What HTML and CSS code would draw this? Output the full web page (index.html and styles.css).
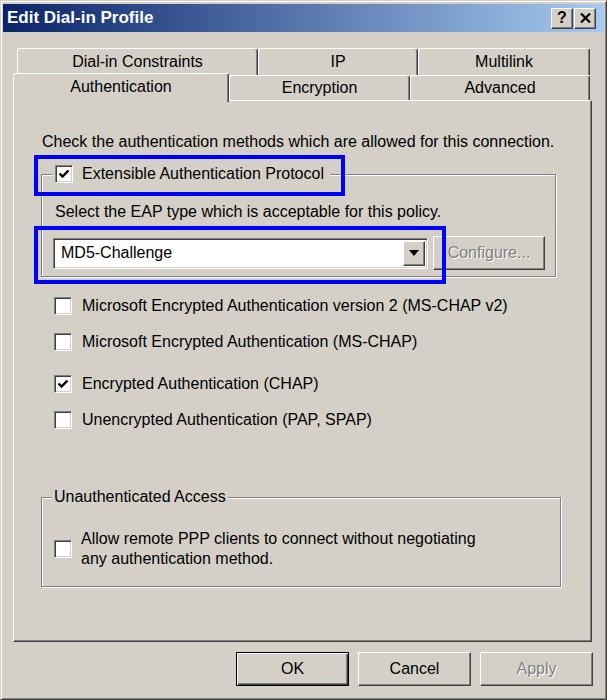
FILE: index.html
```html
<!DOCTYPE html>
<html lang="en">
<head>
    <meta charset="UTF-8">
    <title>Edit Dial-in Profile</title>
    <link rel="stylesheet" href="styles.css">
</head>
<body>
    <div class="window">
        <div class="titlebar">
            <span class="title">Edit Dial-in Profile</span>
            <div class="caption-btns">
                <span class="cap-btn help">?</span>
                <span class="cap-btn">
                    <svg width="11" height="10" viewBox="0 0 11 10"><path d="M1 0.5 L10 9.5 M10 0.5 L1 9.5" stroke="#000" stroke-width="2.2" fill="none"/></svg>
                </span>
            </div>
        </div>

        <div class="tabs">
            <div class="tab-row back">
                <div class="tab w-dial">Dial-in Constraints</div>
                <div class="tab w-ip">IP</div>
                <div class="tab w-multi">Multilink</div>
            </div>
            <div class="tab-row front">
                <div class="tab selected w-auth">Authentication</div>
                <div class="tab w-enc">Encryption</div>
                <div class="tab w-adv">Advanced</div>
            </div>
        </div>

        <div class="panel">
            <p class="intro">Check the authentication methods which are allowed for this connection.</p>

            <fieldset class="group eap">
                <legend><span class="checkbox checked"><svg width="12" height="12" viewBox="0 0 12 12"><path d="M1.5 5.5 L4.5 8.5 L10.5 2.5" stroke="#000" stroke-width="2.4" fill="none"/></svg></span>Extensible Authentication Protocol</legend>
                <p class="hint">Select the EAP type which is acceptable for this policy.</p>
                <div class="eap-row">
                    <div class="combo">
                        <span class="combo-text">MD5-Challenge</span>
                        <span class="combo-btn"><svg width="10" height="6" viewBox="0 0 10 6"><path d="M0 0 H10 L5 6 Z" fill="#000"/></svg></span>
                    </div>
                    <span class="btn disabled configure">Configure...</span>
                </div>
            </fieldset>

            <ul class="methods">
                <li><span class="checkbox"></span>Microsoft Encrypted Authentication version 2 (MS-CHAP v2)</li>
                <li><span class="checkbox"></span>Microsoft Encrypted Authentication (MS-CHAP)</li>
                <li class="wide"><span class="checkbox checked"><svg width="12" height="12" viewBox="0 0 12 12"><path d="M1.5 5.5 L4.5 8.5 L10.5 2.5" stroke="#000" stroke-width="2.4" fill="none"/></svg></span>Encrypted Authentication (CHAP)</li>
                <li><span class="checkbox"></span>Unencrypted Authentication (PAP, SPAP)</li>
            </ul>

            <fieldset class="group unauth">
                <legend>Unauthenticated Access</legend>
                <div class="unauth-row">
                    <span class="checkbox"></span>
                    <span class="unauth-text">Allow remote PPP clients to connect without negotiating<br>any authentication method.</span>
                </div>
            </fieldset>

            <!-- annotation boxes drawn over the dialog -->
            <div class="hl hl-eap"></div>
            <div class="hl hl-combo"></div>
        </div>

        <div class="buttons">
            <span class="btn default">OK</span>
            <span class="btn">Cancel</span>
            <span class="btn disabled">Apply</span>
        </div>
    </div>
</body>
</html>
```

FILE: styles.css
```css
body {
    margin: 0;
    background: #d4d0c8;
    font-family: "Liberation Sans", Arial, sans-serif;
    font-size: 16px;
    color: #000;
}
.window {
    width: 607px;
    height: 700px;
    box-sizing: border-box;
    border: 1px solid;
    border-color: #d4d0c8 #404040 #404040 #d4d0c8;
    box-shadow: inset 1px 1px #fff, inset -1px -1px #808080;
    padding: 2px;
    display: flex;
    flex-direction: column;
}
.titlebar {
    margin-top: 1px;
    height: 28px;
    background: linear-gradient(to right, #0a246a, #a6caf0);
    display: flex;
    align-items: center;
    justify-content: space-between;
    padding: 0 8px 0 4px;
}
.title {
    color: #fff;
    font-weight: bold;
    font-size: 17px;
}
.caption-btns {
    display: flex;
    gap: 1px;
}
.cap-btn {
    width: 22px;
    height: 21px;
    box-sizing: border-box;
    background: #d4d0c8;
    border: 1px solid;
    border-color: #fff #404040 #404040 #fff;
    box-shadow: inset -1px -1px #808080;
    display: flex;
    align-items: center;
    justify-content: center;
}
.cap-btn.help {
    font-weight: bold;
    font-size: 16px;
    line-height: 1;
}

/* tabs */
.tabs {
    margin: 16px 12px 0 10px;
}
.tab-row {
    display: flex;
    height: 27px;
}
.tab-row.back {
    padding-left: 4px;
}
.tab-row.front {
    margin-top: -2px;
    align-items: flex-start;
}
.tab {
    box-sizing: border-box;
    height: 27px;
    background: #d4d0c8;
    border: 1px solid #fff;
    border-bottom: none;
    border-right-color: #404040;
    box-shadow: inset -1px 0 #808080;
    border-radius: 3px 3px 0 0;
    display: flex;
    align-items: center;
    justify-content: center;
}
.front .tab {
    height: 25px;
    margin-top: 2px;
}
.front .tab.selected {
    height: 29px;
    margin-top: 0;
    margin-bottom: -2px;
    position: relative;
    z-index: 1;
    padding-bottom: 2px;
}
.w-dial { width: 241px; }
.w-ip { width: 160px; }
.w-multi { width: 172px; }
.w-auth { width: 216px; }
.w-enc { width: 181px; }
.w-adv { width: 180px; }

/* page body */
.panel {
    position: relative;
    margin: 0 12px 0 10px;
    height: 542px;
    box-sizing: border-box;
    border: 1px solid;
    border-color: #fff #404040 #404040 #fff;
    box-shadow: inset -1px -1px #808080;
    padding-top: 31px;
}
.intro {
    margin: 0 0 0 28px;
    line-height: 20px;
}
.group {
    box-sizing: border-box;
    margin: 12px 0 0 27px;
    border: 1px solid #808080;
    box-shadow: inset 1px 1px #fff, 1px 1px #fff;
    min-width: 0;
}
.group legend {
    line-height: 20px;
    height: 20px;
    display: flex;
    align-items: center;
    background: #d4d0c8;
}
.eap {
    width: 515px;
    padding: 18px 0 6px 11px;
}
.eap legend {
    padding: 0 6px 0 2px;
}
.eap legend .checkbox {
    margin-right: 9px;
}
.hint {
    margin: 0 0 0 2px;
    line-height: 20px;
}
.eap-row {
    margin-top: 14px;
    display: flex;
    align-items: center;
    gap: 5px;
    height: 34px;
}
.combo {
    width: 375px;
    height: 31px;
    box-sizing: border-box;
    background: #fff;
    border: 1px solid;
    border-color: #808080 #fff #fff #808080;
    box-shadow: inset 1px 1px #404040, inset -1px -1px #d4d0c8;
    display: flex;
    align-items: center;
    justify-content: space-between;
    padding: 2px;
}
.combo-text {
    padding-left: 5px;
}
.combo-btn {
    width: 22px;
    height: 100%;
    box-sizing: border-box;
    background: #d4d0c8;
    border: 1px solid;
    border-color: #fff #404040 #404040 #fff;
    box-shadow: inset -1px -1px #808080;
    display: flex;
    align-items: center;
    justify-content: center;
}

.checkbox {
    width: 18px;
    height: 18px;
    flex: none;
    box-sizing: border-box;
    background: #fff;
    border: 1px solid;
    border-color: #808080 #fff #fff #808080;
    box-shadow: inset 1px 1px #404040, inset -1px -1px #d4d0c8;
    display: flex;
    align-items: center;
    justify-content: center;
}

.methods {
    list-style: none;
    margin: 19px 0 0;
    padding: 0 0 0 40px;
}
.methods li {
    display: flex;
    align-items: center;
    height: 20px;
    margin-top: 16px;
}
.methods li:first-child {
    margin-top: 0;
}
.methods li.wide {
    margin-top: 22px;
}
.methods .checkbox {
    margin-right: 10px;
}

.unauth {
    width: 520px;
    margin-top: 57px;
    padding: 22px 0 17px 12px;
}
.unauth legend {
    margin-left: -2px;
    padding: 0 2px;
}
.unauth-row {
    display: flex;
    align-items: center;
}
.unauth-row .checkbox {
    margin-right: 9px;
}
.unauth-text {
    line-height: 20px;
}

.hl {
    position: absolute;
    box-sizing: border-box;
    border: 4px solid #0000ff;
}
.hl-eap {
    left: 20px;
    top: 54px;
    width: 311px;
    height: 41px;
}
.hl-combo {
    left: 20px;
    top: 125px;
    width: 412px;
    height: 58px;
}

/* push buttons */
.buttons {
    margin-top: 10px;
    padding-right: 11px;
    display: flex;
    justify-content: flex-end;
    gap: 9px;
}
.btn {
    width: 113px;
    height: 34px;
    box-sizing: border-box;
    background: #d4d0c8;
    border: 1px solid;
    border-color: #fff #404040 #404040 #fff;
    box-shadow: inset -1px -1px #808080;
    display: flex;
    align-items: center;
    justify-content: center;
}
.btn.default {
    border: 1px solid #000;
    box-shadow: inset 1px 1px #fff, inset -1px -1px #404040, inset -2px -2px #808080;
}
.btn.configure {
    width: 112px;
}
.btn.disabled {
    color: #808080;
    text-shadow: 1px 1px #fff;
}
```
